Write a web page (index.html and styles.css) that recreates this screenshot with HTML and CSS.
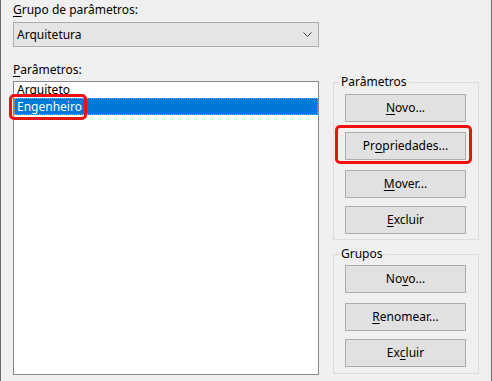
FILE: index.html
```html
<!DOCTYPE html>
<html lang="pt-BR">
<head>
<meta charset="utf-8">
<title>Parâmetros</title>
<link rel="stylesheet" href="styles.css">
</head>
<body>
<div class="window">
  <div class="left">
    <div class="label label-top"><u>G</u>rupo de parâmetros:</div>
    <div class="combo">
      <span class="combo-text">Arquitetura</span>
      <svg class="chevron" width="9" height="5" viewBox="0 0 9 5"><polyline points="0.5,0.5 4.5,4.5 8.5,0.5" fill="none" stroke="#404040" stroke-width="1"/></svg>
    </div>
    <div class="label label-list"><u>P</u>arâmetros:</div>
    <div class="list">
      <div class="item">Arquiteto</div>
      <div class="item selected">Engenheiro<span class="mark mark-item"></span></div>
    </div>
  </div>
  <div class="right">
    <fieldset class="group group-params">
      <legend>Parâmetros</legend>
      <div class="group-body body-params">
        <div class="btn"><u>N</u>ovo...</div>
        <div class="btn wide-gap">Pr<u>o</u>priedades...<span class="mark mark-btn"></span></div>
        <div class="btn wide-gap"><u>M</u>over...</div>
        <div class="btn"><u>E</u>xcluir</div>
      </div>
    </fieldset>
    <fieldset class="group group-groups">
      <legend>Grupos</legend>
      <div class="group-body body-groups">
        <div class="btn">No<u>v</u>o...</div>
        <div class="btn wide-gap"><u>R</u>enomear...</div>
        <div class="btn">Ex<u>c</u>luir</div>
      </div>
    </fieldset>
  </div>
</div>
</body>
</html>
```
FILE: styles.css
```css
html, body {
  margin: 0;
  padding: 0;
  background: #f0f0f0;
}
body {
  font-family: "Noto Sans", "Open Sans", "Liberation Sans", sans-serif;
  font-size: 12px;
  line-height: 16px;
  color: #000;
}
.window {
  box-sizing: border-box;
  width: 492px;
  height: 381px;
  border-left: 1px solid #6b6b6b;
  border-right: 1px solid #6b6b6b;
  background: #f0f0f0;
  display: flex;
  padding-left: 12px;
}
u {
  text-decoration: underline;
  text-underline-offset: 2px;
  text-decoration-thickness: 1px;
}
.left {
  width: 306px;
  display: flex;
  flex-direction: column;
}
.label-top {
  margin-top: 2px;
  height: 16px;
}
.combo {
  box-sizing: border-box;
  margin-top: 4px;
  height: 25px;
  width: 306px;
  border: 1px solid #adadad;
  background: #e5e5e5;
  display: flex;
  align-items: center;
  justify-content: space-between;
  padding: 0 6px 0 3px;
}
.chevron {
  display: block;
}
.label-list {
  margin-top: 15px;
  height: 16px;
}
.list {
  box-sizing: border-box;
  margin-top: 3px;
  height: 294px;
  border: 1px solid #828790;
  background: #fff;
}
.item {
  position: relative;
  box-sizing: border-box;
  height: 16px;
  padding-left: 3px;
  white-space: nowrap;
}
.item.selected {
  height: 17px;
  background: #0078d7;
  color: #fff;
  border: 1px dotted #f59a2a;
  padding-left: 2px;
  line-height: 15px;
}
.mark {
  position: absolute;
  border: 3px solid #f01010;
  border-radius: 5px;
  pointer-events: none;
}
.mark-item {
  left: -6px;
  top: -5px;
  width: 72px;
  height: 20px;
}
.right {
  margin-left: 14px;
  width: 146px;
  display: flex;
  flex-direction: column;
}
.group {
  margin: 0;
  padding: 0;
  border: 1px solid #dcdcdc;
  min-width: 0;
}
.group legend {
  margin-left: 5px;
  padding: 0 2px;
  line-height: 16px;
}
.group-params {
  margin-top: 74px;
}
.group-groups {
  margin-top: 6px;
}
.group-body {
  display: flex;
  flex-direction: column;
  padding-left: 11px;
  padding-right: 12px;
}
.body-params {
  padding-top: 4px;
  padding-bottom: 5px;
}
.body-groups {
  padding-top: 3px;
  padding-bottom: 6px;
}
.btn {
  position: relative;
  box-sizing: border-box;
  height: 28px;
  border: 1px solid #adadad;
  background: #e1e1e1;
  display: flex;
  align-items: center;
  justify-content: center;
  white-space: nowrap;
}
.btn + .btn {
  margin-top: 8px;
}
.btn + .btn.wide-gap {
  margin-top: 10px;
}
.mark-btn {
  left: -11px;
  top: -8px;
  width: 131px;
  height: 33px;
}
```
